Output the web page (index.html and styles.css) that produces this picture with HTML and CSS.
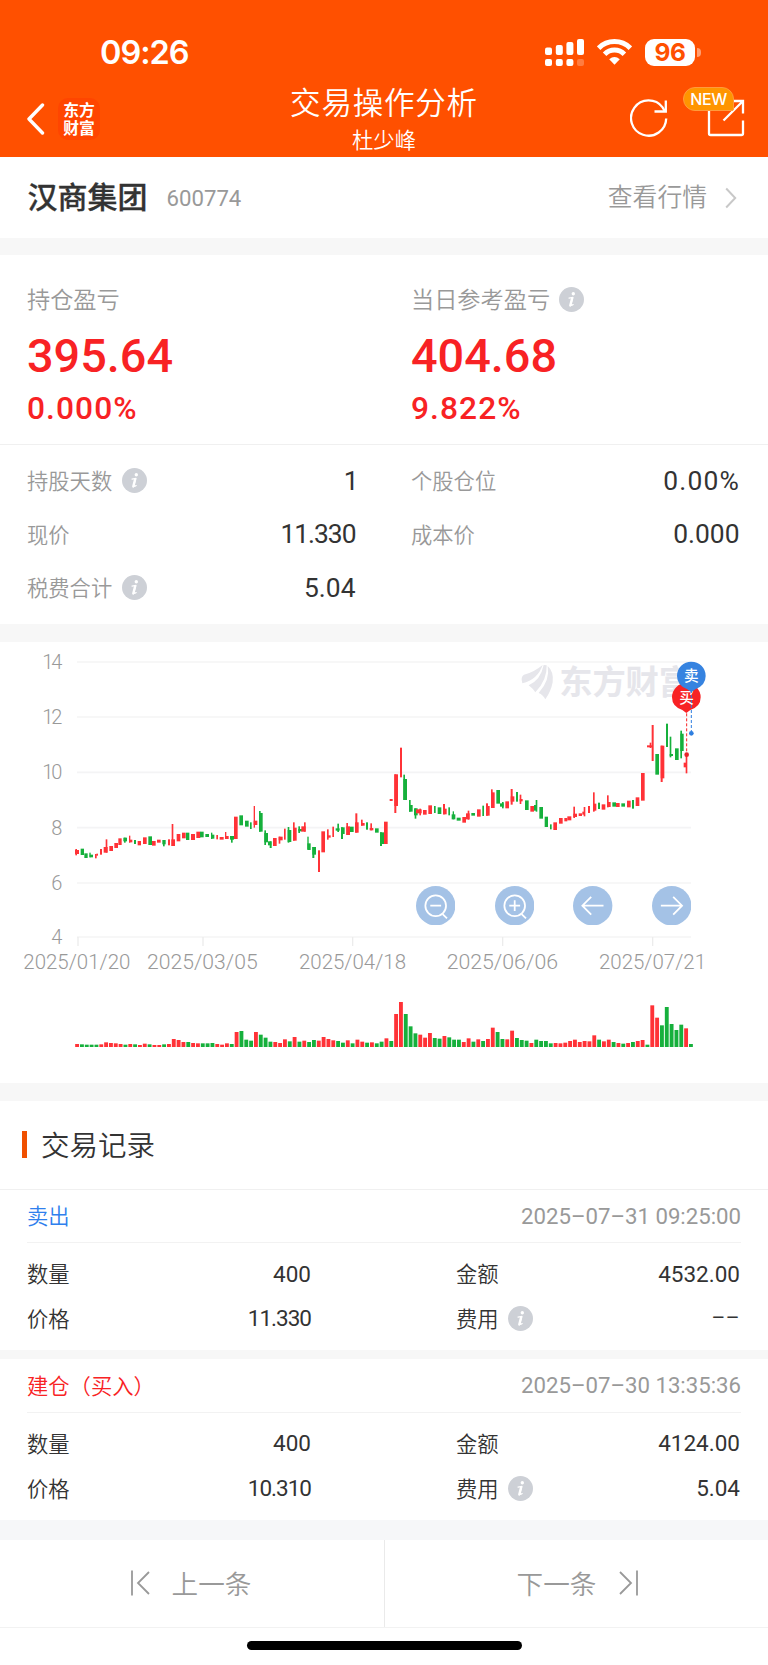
FILE: index.html
```html
<!DOCTYPE html>
<html lang="zh-CN">
<head>
<meta charset="utf-8">
<title>交易操作分析</title>
<link rel="stylesheet" href="styles.css">
</head>
<body>
<svg width="0" height="0" class="defs">
  <symbol id="info" viewBox="0 0 25 25">
    <circle cx="12.5" cy="12.5" r="12.5" fill="#cdd0d6"/>
    <circle cx="14.3" cy="6.8" r="1.7" fill="#fff"/>
    <path d="M10 11.2L14 10.4L12.1 17.8Q11.8 19.2 14.2 17.6" fill="none" stroke="#fff" stroke-width="1.2" stroke-linecap="round" stroke-linejoin="round"/>
    <path d="M13.1 11L11.2 18.6" stroke="#fff" stroke-width="2.2" stroke-linecap="round"/>
  </symbol>
</svg>
<header class="header">
  <div class="status">
    <span class="time">09:26</span>
    <div class="status-icons">
      <svg width="39" height="27" viewBox="0 0 39 27" fill="#fff">
        <rect x="0" y="8.5" width="7" height="7.5" rx="2"/><rect x="10.8" y="6" width="7" height="10" rx="2"/><rect x="21.4" y="3" width="7" height="13" rx="2"/><rect x="32" y="0" width="7" height="16" rx="2"/>
        <rect x="0" y="20" width="7" height="7" rx="2"/><rect x="10.8" y="20" width="7" height="7" rx="2"/><rect x="21.4" y="20" width="7" height="7" rx="2"/><rect x="32" y="20" width="7" height="7" rx="2" opacity=".25"/>
      </svg>
      <svg width="35" height="27" viewBox="0 0 35 27" fill="none" stroke="#fff" stroke-width="5">
        <path d="M1.6 9.2A22.5 22.5 0 0 1 33.4 9.2"/><path d="M7.6 15.2A14 14 0 0 1 27.4 15.2"/>
        <path d="M12.2 20.2Q17.5 16 22.8 20.2L17.5 25.8Z" fill="#fff" stroke="none"/>
      </svg>
      <div class="battery"><span class="battery-level">96</span><span class="battery-nub"></span></div>
    </div>
  </div>
  <div class="nav">
    <div class="nav-left">
      <svg width="18" height="32" viewBox="0 0 18 32"><path d="M15.5 2L2 16L15.5 30" fill="none" stroke="#fff" stroke-width="3.4" stroke-linecap="round" stroke-linejoin="round"/></svg>
      <div class="brand"><span>东方</span><span>财富</span></div>
    </div>
    <div class="nav-title"><h1>交易操作分析</h1><p>杜少峰</p></div>
    <div class="nav-right">
      <svg width="38" height="38" viewBox="0 0 38 38" fill="none" stroke="#fff" stroke-width="2.3"><path d="M36.2 19.5A17.6 17.6 0 1 1 32.6 8.4L35 12.5"/><path d="M35.8 1.5V12.5H24.5"/></svg>
      <div class="share">
        <svg width="38" height="38" viewBox="0 0 38 38" fill="none" stroke="#fff" stroke-width="2.3"><path d="M14 2H3.6Q2 2 2 3.6V34.4Q2 36 3.6 36H34.4Q36 36 36 34.4V21.5"/><path d="M25 2H36V14.5M36 2L16.5 21.5"/></svg>
        <span class="badge">NEW</span>
      </div>
    </div>
  </div>
</header>
<main>
  <section class="stock">
    <h2>汉商集团</h2><span class="code">600774</span>
    <a class="quote"><span>查看行情</span><svg width="12" height="22" viewBox="0 0 12 22"><path d="M1.2 1.5L10.2 11L1.2 20.5" fill="none" stroke="#c8c8c8" stroke-width="2"/></svg></a>
  </section>
  <section class="summary">
    <div class="profit">
      <div><p class="p-label"><span>持仓盈亏</span></p><p class="p-value">395.64</p><p class="p-rate">0.000%</p></div>
      <div><p class="p-label"><span>当日参考盈亏</span><svg class="info"><use href="#info"/></svg></p><p class="p-value">404.68</p><p class="p-rate">9.822%</p></div>
    </div>
    <div class="details">
      <div class="row"><div class="label"><span>持股天数</span><svg class="info"><use href="#info"/></svg></div><b class="single">1</b></div>
      <div class="row"><div class="label"><span>个股仓位</span></div><b class="wide">0.00%</b></div>
      <div class="row"><div class="label"><span>现价</span></div><b class="ones">11.330</b></div>
      <div class="row"><div class="label"><span>成本价</span></div><b>0.000</b></div>
      <div class="row"><div class="label"><span>税费合计</span><svg class="info"><use href="#info"/></svg></div><b>5.04</b></div>
    </div>
  </section>
  <section class="chart">
    <svg id="chart" width="768" height="441" viewBox="0 0 2304 1323"></svg>
    <div class="tools">
      <svg width="39.4" height="39.4" viewBox="0 0 40 40"><circle class="disc" cx="20" cy="20" r="20"/><circle cx="20" cy="20" r="10.5"/><path d="M14.5 20H25.5M27 28.5L31.5 33"/></svg>
      <svg width="39.4" height="39.4" viewBox="0 0 40 40"><circle class="disc" cx="20" cy="20" r="20"/><circle cx="20" cy="20" r="10.5"/><path d="M14.5 20H25.5M20 14.5V25.5M27 28.5L31.5 33"/></svg>
      <svg width="39.4" height="39.4" viewBox="0 0 40 40"><circle class="disc" cx="20" cy="20" r="20"/><path d="M31 20H9.5M18.5 11L9.5 20L18.5 29"/></svg>
      <svg width="39.4" height="39.4" viewBox="0 0 40 40"><circle class="disc" cx="20" cy="20" r="20"/><path d="M9 20H30.5M21.5 11L30.5 20L21.5 29"/></svg>
    </div>
  </section>
  <section class="records">
    <h3><span>交易记录</span></h3>
    <article class="record">
      <div class="record-head"><span class="sell">卖出</span><time>2025–07–31 09:25:00</time></div>
      <div class="record-body">
        <div class="cell"><div class="label"><span>数量</span></div><b>400</b></div><div class="cell"><div class="label"><span>金额</span></div><b>4532.00</b></div>
        <div class="cell"><div class="label"><span>价格</span></div><b class="ones">11.330</b></div><div class="cell"><div class="label"><span>费用</span><svg class="info"><use href="#info"/></svg></div><b class="dash">––</b></div>
      </div>
    </article>
    <article class="record">
      <div class="record-head"><span class="buy">建仓（买入）</span><time>2025–07–30 13:35:36</time></div>
      <div class="record-body">
        <div class="cell"><div class="label"><span>数量</span></div><b>400</b></div><div class="cell"><div class="label"><span>金额</span></div><b>4124.00</b></div>
        <div class="cell"><div class="label"><span>价格</span></div><b class="ones">10.310</b></div><div class="cell"><div class="label"><span>费用</span><svg class="info"><use href="#info"/></svg></div><b>5.04</b></div>
      </div>
    </article>
  </section>
</main>
<footer class="pager">
  <a><svg width="20" height="26" viewBox="0 0 20 26"><path d="M1 .5V25.5M18 2L7 13L18 24"/></svg><span>上一条</span></a>
  <a><span>下一条</span><svg width="20" height="26" viewBox="0 0 20 26"><path d="M19 .5V25.5M2 2L13 13L2 24"/></svg></a>
</footer>
<div class="home"></div>
<script src="chart.js"></script>
</body>
</html>
```
FILE: styles.css
```css
* { box-sizing: border-box; margin: 0; padding: 0; }
body { width: 768px; height: 1665px; background: #fff; color: #333; font-family: Roboto, "Noto Sans CJK SC", sans-serif; font-weight: 350; overflow: hidden; }
svg { display: block; flex: none; }
.defs { position: absolute; }
h1, h2, h3 { font-weight: inherit; }
b, time, .code { font-weight: 400; }
p, span, b, time, h1, h2, h3, a { white-space: nowrap; }
.header { height: 157px; background: #ff5000; color: #fff; }
.status { height: 82px; padding: 23px 67px 0 100px; display: flex; justify-content: space-between; }
.time { font: 600 32.5px/60px Inter, sans-serif; letter-spacing: -1px; }
.status-icons { display: flex; gap: 13px; height: 58px; align-items: center; }
.battery { display: flex; align-items: center; gap: 2px; width: 56px; }
.battery-level { width: 50px; height: 27px; border-radius: 9px; background: #fff; color: #ff5000; font: 700 24.5px/27px Inter, sans-serif; letter-spacing: -.5px; text-align: center; }
.battery-nub { width: 4px; height: 9px; border-radius: 0 4px 4px 0; background: #ff9f73; }
.nav { height: 75px; display: grid; grid-template-columns: 1fr 240px 1fr; }
.nav-left { display: flex; align-items: center; padding: 0 0 2px 26.5px; gap: 13.5px; }
.brand { width: 42px; height: 42px; border-radius: 10px; background: #ff4500; display: flex; flex-direction: column; align-items: center; justify-content: center; font: 700 15.8px/18px "Noto Sans CJK SC", sans-serif; }
.nav-title { text-align: center; padding-top: 1px; }
.nav-title h1 { font-size: 30.5px; line-height: 42px; letter-spacing: .8px; }
.nav-title p { font-size: 21.3px; line-height: 32px; }
.nav-right { display: flex; align-items: center; justify-content: flex-end; gap: 39px; padding: 0 23px 3px 0; }
.share { position: relative; }
.badge { position: absolute; left: -24px; top: -12.5px; width: 51px; height: 24px; border-radius: 12px 12px 2px 12px; background: #ff9500; border: 1px solid #ff9b3c; font: 500 16px/23px Inter, sans-serif; text-align: center; letter-spacing: -.4px; }
.stock { height: 98px; border-bottom: 17px solid #f7f7f7; padding: 0 31px 0 27.5px; display: flex; align-items: center; }
.stock h2 { font-size: 30px; font-weight: 500; line-height: 40px; -webkit-text-stroke: .3px #333; }
.code { margin-left: 19px; font-size: 22.2px; color: #999; }
.quote { margin-left: auto; display: flex; align-items: center; gap: 18px; font-size: 24.8px; color: #999; }
.quote span { line-height: 34px; }
.summary { height: 386.5px; border-bottom: 18px solid #f7f7f7; }
.profit { height: 190px; padding: 26px 27px 0; border-bottom: 1px solid #f0f0f0; display: grid; grid-template-columns: 328.5px 328.5px; column-gap: 55.5px; }
.p-label { display: flex; align-items: center; gap: 9px; height: 36px; font-size: 23.2px; color: #999; }
.p-label span { padding-bottom: 2px; }
.p-value { font-size: 46.8px; font-weight: 500; line-height: 78px; color: #f82224; }
.p-rate { font-size: 31.7px; font-weight: 500; line-height: 28px; letter-spacing: 1.1px; color: #f82224; }
.info { width: 25px; height: 25px; }
.details { padding: 9px 27px 0; display: grid; grid-template-columns: 328.5px 328.5px; column-gap: 55.5px; grid-auto-rows: 53.5px; }
.row, .cell { display: flex; justify-content: space-between; align-items: center; }
.label { display: flex; align-items: center; gap: 9.5px; font-size: 21.3px; }
.label span { padding-bottom: 2px; }
.row .label { color: #999; }
.row b { font-size: 26.4px; }
.row .ones, .cell .ones { letter-spacing: -1px; }
.row .single { margin-right: -3px; }
.row .wide { letter-spacing: 1.2px; margin-right: -.5px; }
.chart { position: relative; height: 459px; border-bottom: 18px solid #f7f7f7; }
.tools { position: absolute; left: 416px; top: 244px; display: flex; gap: 39.2px; fill: none; stroke: #fff; stroke-width: 1.8; }
.tools .disc { fill: #a4c2e6; stroke: none; }
.records h3 { height: 89px; padding-left: 21.5px; display: flex; align-items: center; gap: 14px; font-size: 28.5px; border-bottom: 1px solid #f0f0f0; }
.records h3 span { padding-bottom: 3px; }
.records h3::before { content: ""; width: 5.5px; height: 27px; background: #f05000; }
.record { border-bottom: 9px solid #f7f7f7; }
.record:last-child { border-bottom: 20px solid #f6f7f9; }
.record-head { margin: 0 27px; height: 53.5px; border-bottom: 1px solid #f2f2f2; display: flex; justify-content: space-between; align-items: center; font-size: 21.3px; }
.record-head span { padding-bottom: 2px; }
.record-head time { font-size: 22.2px; color: #999; }
.sell { color: #2f80ed; }
.buy { color: #f82224; }
.record-body { padding: 8.5px 28px 9.5px 27px; display: grid; grid-template-columns: 284px 284px; justify-content: space-between; grid-auto-rows: 44.6px; }
.cell b { font-size: 22.5px; }
.cell .dash { font-size: 21px; letter-spacing: .5px; }
.pager { height: 88px; display: grid; grid-template-columns: 1fr 1fr; border-bottom: 1px solid #f2f2f2; color: #999; font-size: 26.6px; }
.pager a { display: flex; align-items: center; justify-content: center; gap: 21px; }
.pager a:first-child { padding-right: 2px; }
.pager a + a { border-left: 1px solid #eaeaea; gap: 22px; padding-left: 2px; }
.pager span { padding-bottom: 2px; }
.pager path { fill: none; stroke: #999; stroke-width: 1.8; }
.home { width: 275px; height: 9px; border-radius: 5px; background: #000; margin: 13px auto 0; }
```
FILE: chart.js
```js
const svg = document.getElementById('chart');
const RED = '#ff3237', GREEN = '#16b03c';
const out = [];
const TOP = -36;

[96, 261, 427, 593, 759, 921].forEach((y, i) => {
  out.push(`<path d="M231 ${y + TOP}H2073" stroke="#f4f4f5" stroke-width="5"/>`);
  const label = String(14 - i * 2);
  out.push(`<text x="187" y="${y + TOP + 21}" text-anchor="end" font-size="60" fill="#999"${label.length > 1 ? ' textLength="60"' : ''}>${label}</text>`);
});
[[234, '2025/01/20', 70, 321], [609, '2025/03/05', 441, 332], [1058, '2025/04/18', 897, 321], [1508, '2025/06/06', 1340, 334], [1958, '2025/07/21', 1797, 321]].forEach(([x, t, l, w]) => {
  out.push(`<path d="M${x} ${921 + TOP}V${948 + TOP}" stroke="#ececec" stroke-width="4"/>`);
  out.push(`<text x="${l}" y="${1017 + TOP}" font-size="62" fill="#999" textLength="${w}" lengthAdjust="spacingAndGlyphs">${t}</text>`);
});

out.push(`<g fill="#e6e6eb" transform="translate(1500 ${TOP})">
<path d="M67 160Q61 140 72 134Q100 128 128 105Q113 149 67 160Z"/>
<path d="M86 166Q122 150 131 105L140 106Q142 150 106 187Q98 175 86 166Z"/>
<path d="M143 108Q162 125 158 157Q153 184 136 208Q129 194 116 189Q151 150 143 108Z"/>
<text x="178" y="192" font-size="100" font-weight="700" textLength="398">东方财富</text></g>`);

// Candle pieces: colour, x, width, top, bottom
const candles = `R225,12,660,672 R226,5,657,676 G242,10,656,675 G253,10,670,684 G268,4,668,682 G269,10,674,682 R285,5,672,685 R289,5,671,677 R300,6,657,674 R311,12,651,668 R317,5,628,668 R328,11,648,663 R343,11,639,654 R355,10,625,645 G370,11,623,634 G372,5,623,638 R387,4,617,638 R387,10,629,637 G402,6,630,642 R413,10,633,646 R429,11,622,642 G445,11,619,645 R456,11,633,647 R471,11,629,638 G487,10,630,643 G489,5,630,649 R504,6,628,646 R515,5,582,648 R514,11,628,648 R530,11,612,634 R546,11,608,625 G558,10,608,630 R573,12,612,630 R589,12,605,624 G600,11,605,622 G616,11,612,621 G633,4,608,627 G633,10,614,626 R649,5,615,628 R659,12,621,629 R675,4,606,627 R675,11,618,627 G690,12,618,629 G693,5,618,638 R702,11,560,627 G718,11,556,586 G735,11,572,590 G750,5,577,597 R761,4,528,593 R761,11,572,585 G777,11,549,605 G777,5,543,605 G793,5,601,645 G793,11,609,637
G804,10,634,646 G809,6,634,654 R819,11,624,648 R836,12,620,631 R836,5,620,641 R852,5,596,629 G863,5,591,638 G863,11,600,636 R879,11,593,632 R879,5,577,632 G895,5,589,609 G895,11,597,604 R904,13,589,605 R912,5,577,605 G922,4,620,658 G922,10,640,660 G937,11,651,674 G937,6,651,684 R954,6,661,726 R964,11,604,667 R981,5,598,629 R981,11,616,623 R997,5,590,621 G1007,12,595,602 G1012,5,581,606 G1023,11,592,612 G1023,6,592,627 R1039,11,589,615 R1039,5,579,615 G1050,11,590,606 R1065,11,577,608 R1066,6,550,608 R1083,11,579,587 R1083,5,569,587 G1098,6,577,599 R1109,11,594,601 R1111,5,580,601 G1125,11,595,608 G1140,12,607,642 G1140,6,607,648 R1152,11,575,642 R1169,9,507,513 R1183,11,433,528 R1183,6,433,549 R1200,6,353,442 G1210,11,447,510 G1210,5,434,510 G1227,5,510,545 G1227,11,525,545 G1242,11,535,556 G1244,5,535,566 R1248,17,538,550 R1258,5,536,556 R1269,11,540,554 R1285,11,526,552 G1302,5,528,549 G1313,11,532,552 R1329,11,536,553 R1329,6,522,553 G1345,5,532,556 G1355,11,553,568 G1358,4,544,568 G1370,12,563,572 R1387,11,561,578 R1398,11,550,568 R1403,5,542,569 G1414,11,549,557 R1431,11,538,560 G1447,5,527,558 R1458,11,528,557 R1458,6,520,557 R1473,11,487,534 R1473,5,478,534 G1489,11,480,521 G1500,11,520,530 G1506,5,516,535
R1516,11,514,535 R1532,6,477,524 R1532,11,499,515 G1548,6,486,515 R1559,5,494,522 R1559,9,507,514 G1575,11,511,540 R1591,11,528,545 G1602,6,525,542 G1607,5,510,545 G1618,11,531,566 G1634,10,560,591 G1650,5,583,598 R1660,11,577,600 R1677,11,564,581 R1693,9,564,574 R1702,12,559,571 R1720,5,530,564 R1720,11,551,561 R1736,10,550,558 R1747,8,545,554 R1751,5,531,559 R1764,6,528,549 R1779,5,487,545 R1779,10,521,542 G1794,6,518,537 R1805,11,523,539 R1821,5,496,532 R1821,11,516,531 G1837,11,517,530 R1848,11,519,531 G1864,11,520,530 R1881,11,512,532 G1896,6,510,536 R1907,11,502,528 R1923,11,429,512 R1941,18,346,352 R1949,5,338,354 R1955,6,285,393 G1966,11,372,434 R1982,11,347,445 R1982,6,347,456 G1998,6,281,351 G2009,5,320,382 G2009,10,372,378 G2025,11,355,390 G2041,5,302,385 G2041,10,311,363 R2057,5,374,430 R2051,10,398,412`;
candles.split(/\s+/).forEach(c => {
  const [x, w, a, b] = c.slice(1).split(',').map(Number);
  out.push(`<rect x="${x}" y="${a + TOP}" width="${w}" height="${b - a}" fill="${c[0] === 'R' ? RED : GREEN}"/>`);
});

// Volume bars: colour and top edge
const volume = 'R1242 G1243 G1244 G1244 G1244 R1243 R1237 R1239 R1240 R1242 G1244 R1242 G1243 R1245 R1241 G1243 R1245 R1245 G1243 R1242 R1227 R1230 R1236 G1236 R1239 R1240 G1240 G1240 G1239 R1242 R1244 R1240 G1242 R1206 G1203 G1229 G1232 R1206 G1214 G1223 G1235 R1236 R1239 R1228 G1234 R1221 G1235 R1232 G1236 G1230 R1232 R1221 R1227 R1231 G1233 G1238 R1231 G1240 R1229 R1235 G1238 R1237 G1240 G1235 R1225 G1233 R1152 R1116 G1152 G1189 G1210 R1214 R1223 R1209 G1224 G1226 R1218 G1222 G1229 G1229 R1236 R1225 G1235 R1228 G1233 R1227 R1193 G1206 G1227 R1228 R1202 G1224 G1230 G1232 R1239 G1229 G1233 G1233 G1240 R1239 R1240 R1238 R1233 R1229 R1236 R1233 R1234 R1216 G1229 R1234 R1229 G1236 R1239 G1241 R1239 G1236 R1233 R1230 G1244 R1126 R1163 G1186 G1131 G1182 G1200 G1184 R1195 G1242';
volume.split(' ').forEach((v, i) => {
  const top = Number(v.slice(1));
  out.push(`<rect x="${225.5 + i * 14.5}" y="${top + TOP}" width="11.6" height="${1251 - top}" fill="${v[0] === 'R' ? RED : GREEN}"/>`);
});

// Buy and sell markers
out.push(`<g transform="translate(1500 ${TOP})" font-weight="500" font-size="44" text-anchor="middle">
<path d="M560 250V374" stroke="#f82224" stroke-width="3" stroke-dasharray="9 6"/><circle cx="560" cy="374" r="7" fill="#e8262b"/>
<path d="M559 249L547 240Q516 230 516 202A43 43 0 0 1 602 202Q602 230 571 240Z" fill="#f82224"/><text x="560" y="218" fill="#fff">买</text>
<path d="M574 180V310" stroke="#2f7fe0" stroke-width="3" stroke-dasharray="9 6"/><circle cx="574" cy="310" r="7" fill="#2f7fe0"/>
<path d="M574 187L562 178Q531 166 531 138A43 43 0 0 1 617 138Q617 166 586 178Z" fill="#3683e0"/><text x="574" y="154" fill="#fff">卖</text></g>`);
svg.innerHTML = out.join('');
```
